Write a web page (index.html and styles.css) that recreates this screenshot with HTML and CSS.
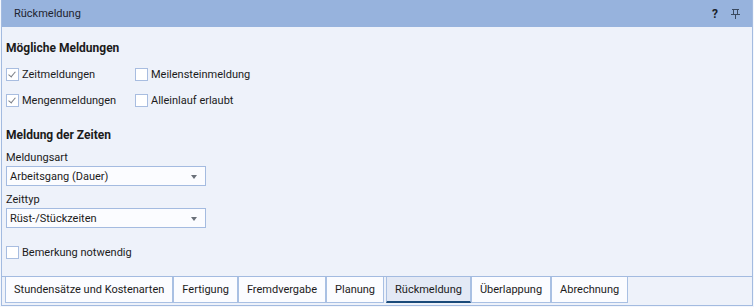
FILE: index.html
```html
<!DOCTYPE html>
<html lang="de">
<head>
<meta charset="utf-8">
<title>Rückmeldung</title>
<link rel="stylesheet" href="styles.css">
</head>
<body>
<div class="window">
  <div class="titlebar">
    <span class="title">Rückmeldung</span>
    <div class="title-icons">
      <span class="help">?</span>
      <svg class="pin" width="9" height="10" viewBox="0 0 9 10">
        <path d="M1 0.5H8M2.5 0.5V5.5M6.5 0.5V5.5M0 5.5H9M4.5 5.5V10" stroke="#3a4a60" stroke-width="1" fill="none"/>
      </svg>
    </div>
  </div>
  <div class="content">
    <div class="heading h1">Mögliche Meldungen</div>
    <div class="checkrow first">
      <label class="check col1"><span class="box checked"></span>Zeitmeldungen</label>
      <label class="check"><span class="box"></span>Meilensteinmeldung</label>
    </div>
    <div class="checkrow">
      <label class="check col1"><span class="box checked"></span>Mengenmeldungen</label>
      <label class="check"><span class="box"></span>Alleinlauf erlaubt</label>
    </div>
    <div class="heading h2">Meldung der Zeiten</div>
    <div class="field-label l1">Meldungsart</div>
    <div class="combo"><span>Arbeitsgang (Dauer)</span><span class="arrow"></span></div>
    <div class="field-label l2">Zeittyp</div>
    <div class="combo"><span>Rüst-/Stückzeiten</span><span class="arrow"></span></div>
    <div class="checkrow note">
      <label class="check"><span class="box"></span>Bemerkung notwendig</label>
    </div>
  </div>
  <div class="tabs">
    <div class="tab">Stundensätze und Kostenarten</div>
    <div class="tab">Fertigung</div>
    <div class="tab">Fremdvergabe</div>
    <div class="tab">Planung</div>
    <div class="tab active">Rückmeldung</div>
    <div class="tab">Überlappung</div>
    <div class="tab">Abrechnung</div>
  </div>
</div>
</body>
</html>
```
FILE: styles.css
```css
html, body {
  margin: 0;
  padding: 0;
  background: #f4f7fc;
}
body {
  padding: 0 1px 1px 1px;
  font-family: Roboto, "Liberation Sans", sans-serif;
  font-size: 11px;
  color: #1b1b1b;
}
.window {
  box-sizing: border-box;
  width: 752px;
  height: 306px;
  border: 1px solid #a3bbe0;
  border-top: none;
  background: #eef2fa;
  display: flex;
  flex-direction: column;
}
.titlebar {
  height: 27px;
  background: #97b3dd;
  display: flex;
  align-items: center;
  padding: 0 0 0 12px;
  flex: none;
}
.title {
  flex: 1;
  color: #1e2430;
}
.title-icons {
  display: flex;
  align-items: center;
  gap: 13px;
  padding-right: 12px;
}
.help {
  font-weight: bold;
  font-size: 12px;
  color: #1a1f2b;
}
.pin {
  display: block;
}
.content {
  padding: 0 0 0 4px;
  display: flex;
  flex-direction: column;
}
.heading {
  font-weight: bold;
  font-size: 12px;
  line-height: 16px;
  height: 16px;
}
.h1 { margin-top: 13px; }
.h2 { margin-top: 17px; }
.checkrow {
  display: flex;
  align-items: center;
  height: 20px;
  margin-top: 6px;
}
.checkrow.first { margin-top: 8px; }
.checkrow.note { margin-top: 14px; }
.check {
  display: flex;
  align-items: center;
  gap: 3px;
}
.col1 { width: 129px; }
.box {
  box-sizing: border-box;
  width: 13px;
  height: 13px;
  border: 1px solid #a8bde0;
  background: #ffffff;
  position: relative;
}
.box.checked::after {
  content: "";
  position: absolute;
  left: 3px;
  top: 1px;
  width: 3px;
  height: 6px;
  border-right: 1.5px solid #7a7e85;
  border-bottom: 1.5px solid #7a7e85;
  transform: rotate(40deg);
}
.field-label {
  line-height: 16px;
  height: 16px;
}
.l1 { margin-top: 7px; }
.l2 { margin-top: 6px; }
.combo {
  box-sizing: border-box;
  width: 200px;
  height: 20px;
  border: 1px solid #a4bbe0;
  background: #fbfcff;
  display: flex;
  align-items: center;
  justify-content: space-between;
  padding: 0 8px 0 3px;
}
.arrow {
  width: 0;
  height: 0;
  border-left: 3.5px solid transparent;
  border-right: 3.5px solid transparent;
  border-top: 4px solid #6a7079;
  margin-top: 1px;
}
.tabs {
  margin-top: auto;
  margin-bottom: 2px;
  border-top: 1px solid #a3bbe0;
  display: flex;
  padding-left: 3px;
  height: 27px;
  box-sizing: border-box;
}
.tab {
  box-sizing: border-box;
  height: 26px;
  padding: 0 8px;
  border: 1px solid #a9c0e3;
  border-top: none;
  background: #fbfcff;
  display: flex;
  align-items: center;
  white-space: nowrap;
}
.tab.active {
  background: #e3e9f5;
  border-bottom: 2px solid #1b4b7a;
  margin-left: 2px;
  padding-top: 1px;
}
```
